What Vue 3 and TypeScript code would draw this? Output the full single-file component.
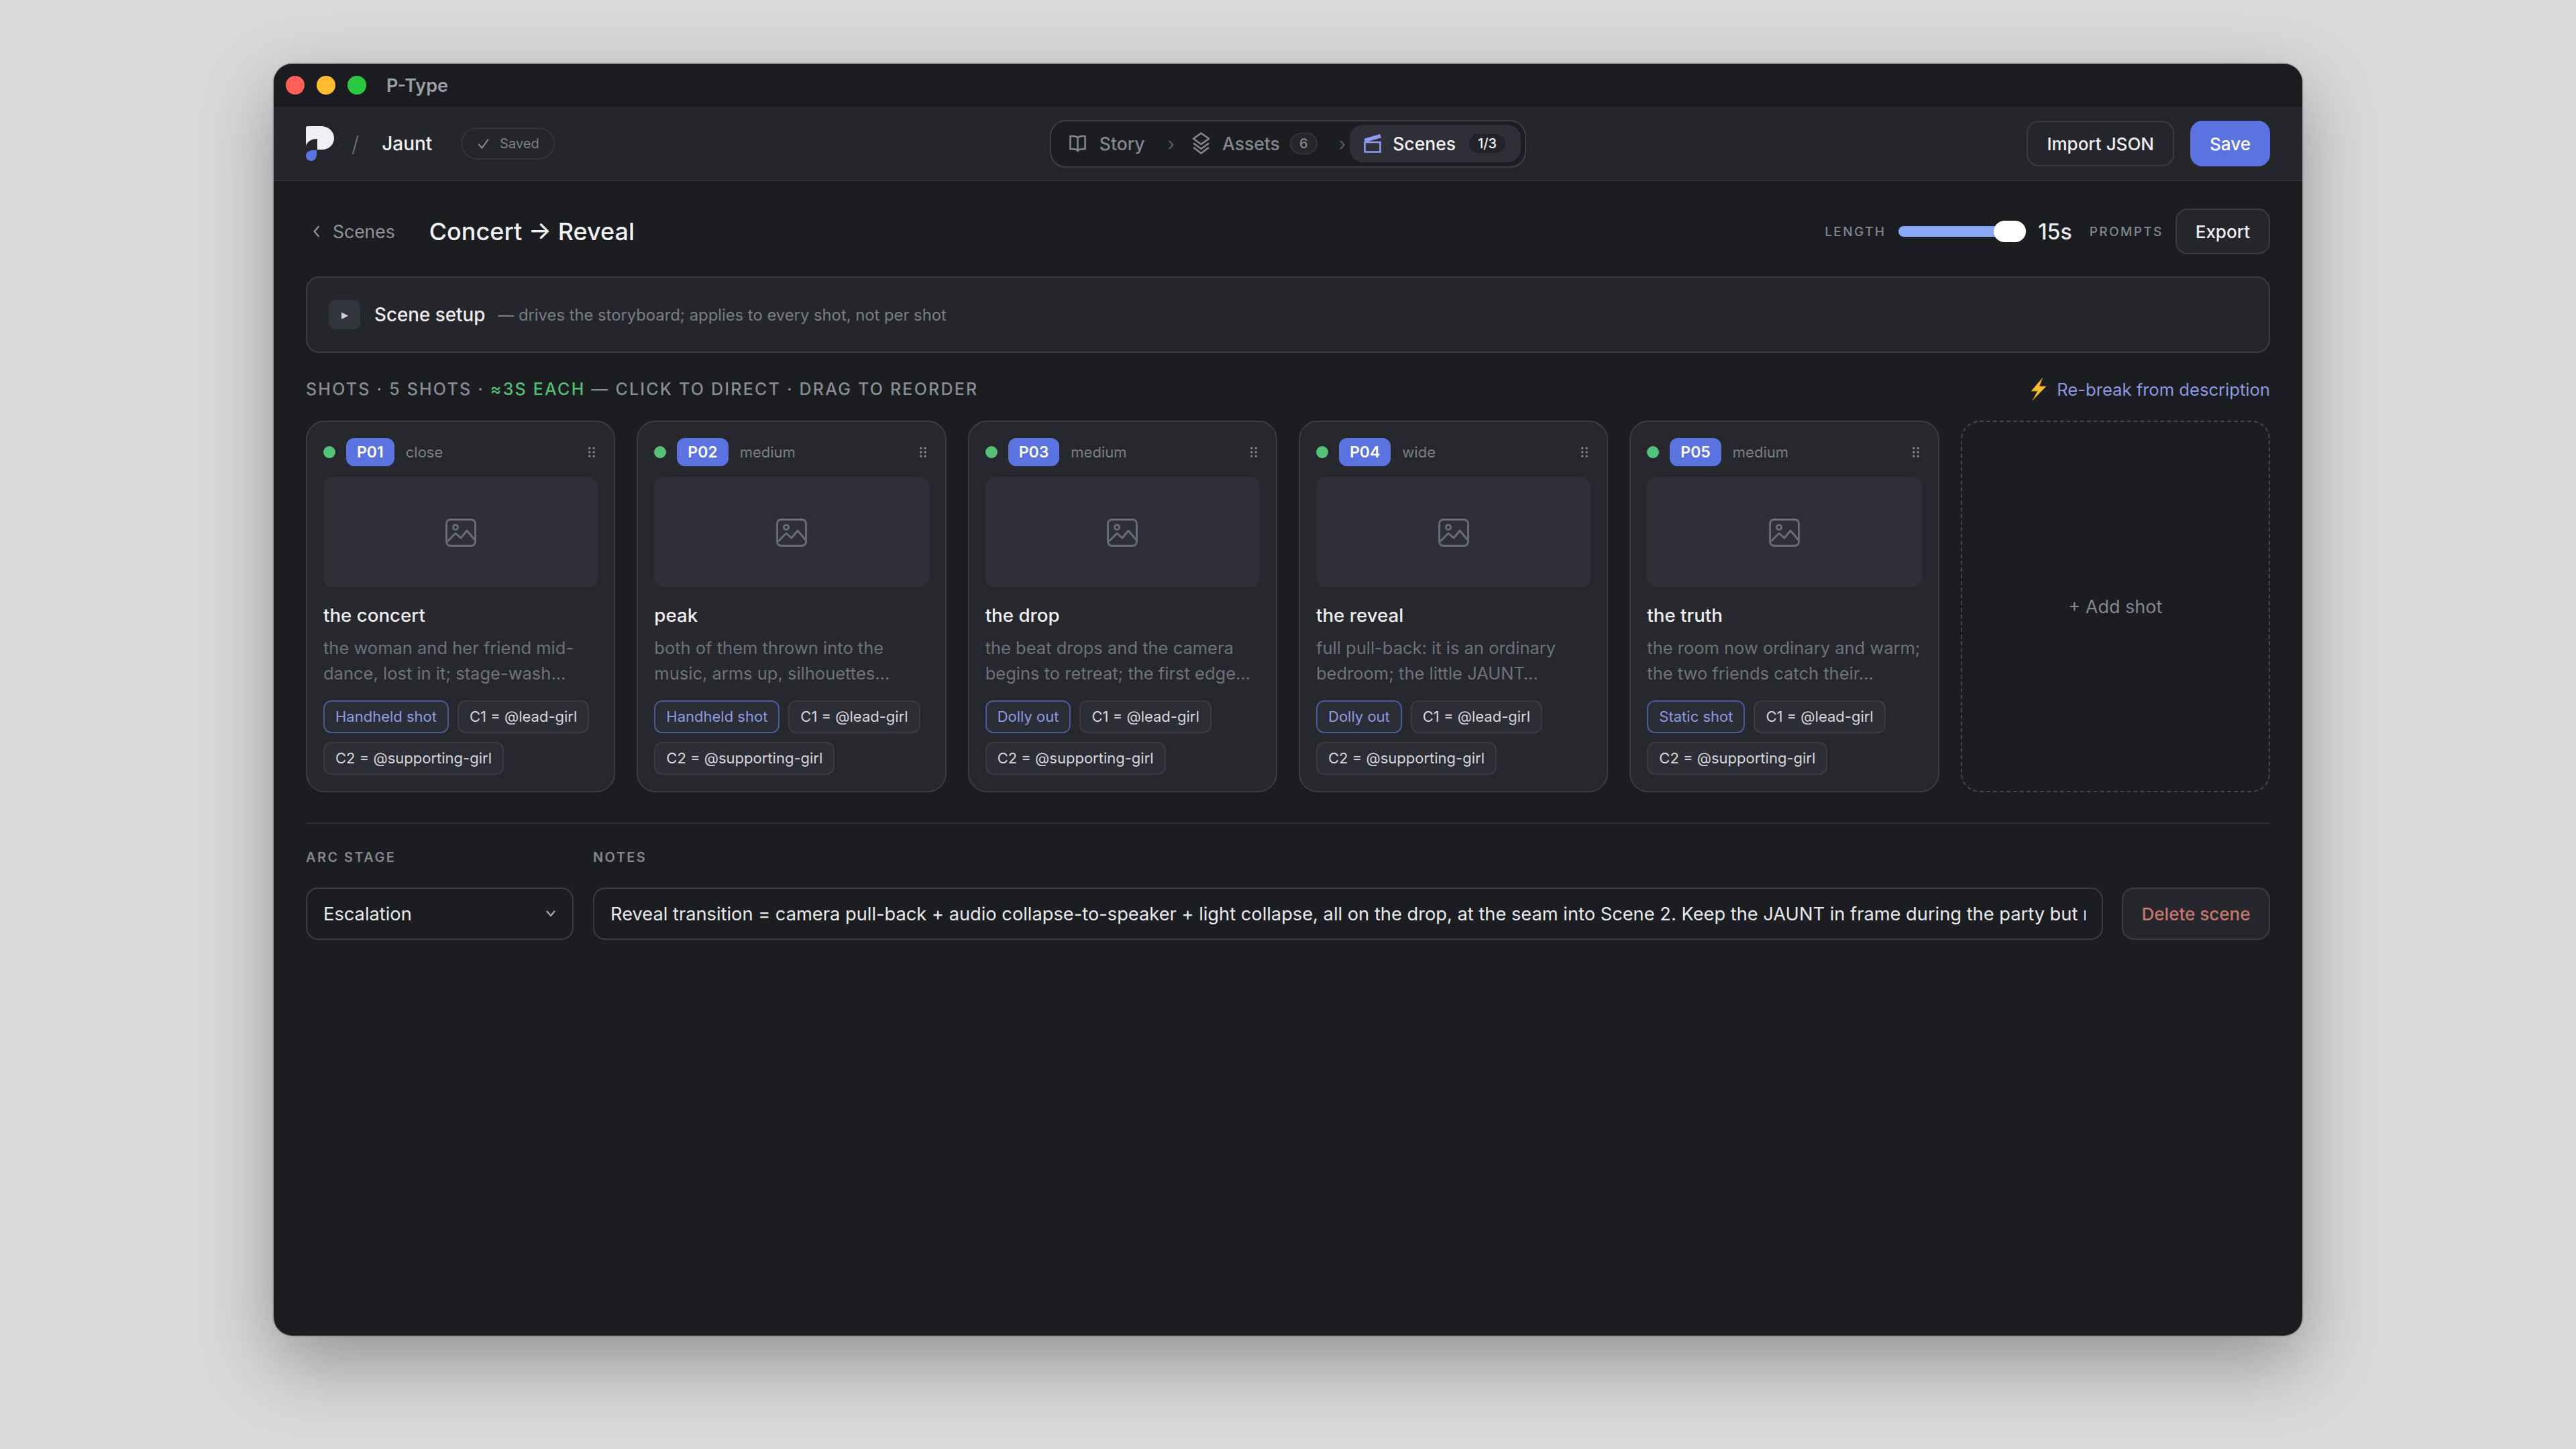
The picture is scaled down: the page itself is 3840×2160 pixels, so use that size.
<script setup lang="ts">
interface Shot { id: string; size: string; title: string; line1: string; line2: string; move: string }
const shots: Shot[] = [
  { id: 'P01', size: 'close', title: 'the concert', line1: 'the woman and her friend mid-', line2: 'dance, lost in it; stage-wash…', move: 'Handheld shot' },
  { id: 'P02', size: 'medium', title: 'peak', line1: 'both of them thrown into the', line2: 'music, arms up, silhouettes…', move: 'Handheld shot' },
  { id: 'P03', size: 'medium', title: 'the drop', line1: 'the beat drops and the camera', line2: 'begins to retreat; the first edge…', move: 'Dolly out' },
  { id: 'P04', size: 'wide', title: 'the reveal', line1: 'full pull-back: it is an ordinary', line2: 'bedroom; the little JAUNT…', move: 'Dolly out' },
  { id: 'P05', size: 'medium', title: 'the truth', line1: 'the room now ordinary and warm;', line2: 'the two friends catch their…', move: 'Static shot' },
]
const notes = 'Reveal transition = camera pull-back + audio collapse-to-speaker + light collapse, all on the drop, at the seam into Scene 2. Keep the JAUNT in frame during the party but r'
</script>

<template>
  <div class="page">
    <div class="window">
      <div class="titlebar">
        <span class="light red"></span><span class="light yellow"></span><span class="light green"></span>
        <span class="app-name">P-Type</span>
      </div>

      <header class="header">
        <div class="brand">
          <svg class="logo" viewBox="0 0 42 52" width="42" height="52">
            <path fill="#eef0f6" d="M3 0H22C34 0 42 8 42 18C42 28 34 35 24 35H17V19C9 19 3 22 0 29V3C0 1 1 0 3 0Z"/>
            <path fill="#5b73e0" d="M10 36H16V43C16 48 12 52 8 52C3 52 0 48 0 44C0 39 5 36 10 36Z"/>
          </svg>
          <span class="slash">/</span>
          <span class="project">Jaunt</span>
          <span class="saved">
            <svg viewBox="0 0 20 20" width="20" height="20" fill="none" stroke="#8b8d95" stroke-width="2"><path d="M2.5 11l5 5.5L17 3.5"/></svg>
            Saved
          </span>
        </div>

        <nav class="steps">
          <span class="step story">
            <svg viewBox="0 0 26 30" width="25" height="30" fill="none" stroke="#85878f" stroke-width="2.6"><path d="M13 5.5C10 3.5 6 3 1.5 3.5V23.5C6 23 10 23.5 13 25.500C16 23.500 20 23 24.500 23.500V3.500C20 3 16 3.500 13 5.500ZM13 5.500V28"/></svg>
            Story
          </span>
          <span class="sep">›</span>
          <span class="step assets">
            <svg viewBox="0 0 28 36" width="27" height="36" fill="none" stroke="#85878f" stroke-width="2.6" stroke-linejoin="round"><path d="M14 2L26 10.500L14 19L2 10.500ZM2 17.500L14 26L26 17.500M2 24L14 33L26 24"/></svg>
            Assets
            <span class="count">6</span>
          </span>
          <span class="sep">›</span>
          <span class="step active">
            <svg viewBox="0 0 26 30" width="26" height="30" fill="none" stroke="#8f98f2" stroke-width="2.6"><path d="M1.500 13H24.500V27.500H1.500Z"/><path d="M1 8L24 1.500L25.500 6L2.500 12.500Z" fill="#8f98f2" stroke-width="1"/></svg>
            Scenes
            <span class="progress">1/3</span>
          </span>
        </nav>

        <div class="actions">
          <button class="btn">Import JSON</button>
          <button class="btn primary">Save</button>
        </div>
      </header>

      <main class="main">
        <div class="subhead">
          <span class="back">
            <svg viewBox="0 0 14 24" width="12" height="22" fill="none" stroke="#9a9ca3" stroke-width="2.400"><path d="M11 3L3 12L11 21"/></svg>
            Scenes
          </span>
          <h1 class="title">Concert → Reveal</h1>
          <div class="controls">
            <span class="eyebrow small">LENGTH</span>
            <span class="slider"><span class="thumb"></span></span>
            <span class="seconds">15s</span>
            <span class="eyebrow small prompts">PROMPTS</span>
            <button class="btn">Export</button>
          </div>
        </div>

        <section class="setup">
          <span class="play">▸</span>
          <span class="setup-title">Scene setup</span>
          <span class="setup-hint">— drives the storyboard; applies to every shot, not per shot</span>
        </section>

        <div class="shots-head">
          <span class="shots-label">SHOTS · 5 SHOTS · <b class="each">≈3S EACH</b> — CLICK TO DIRECT · DRAG TO REORDER</span>
          <span class="rebreak">
            <svg viewBox="0 0 24 34" width="24" height="34"><path fill="#f6c233" stroke="#c98a12" stroke-width=".8" d="M17.500 0.500L1 20H10.500L3 33.500L23 13H13Z"/></svg>
            Re-break from description
          </span>
        </div>

        <div class="cards">
          <article v-for="s in shots" :key="s.id" class="card">
            <div class="card-top">
              <span class="dot"></span>
              <span class="pid">{{ s.id }}</span>
              <span class="size">{{ s.size }}</span>
              <svg class="grip" viewBox="0 0 10 16" width="10" height="16" fill="#85878f">
                <circle cx="1.800" cy="2" r="1.700"/><circle cx="8.200" cy="2" r="1.700"/>
                <circle cx="1.800" cy="8" r="1.700"/><circle cx="8.200" cy="8" r="1.700"/>
                <circle cx="1.800" cy="14" r="1.700"/><circle cx="8.200" cy="14" r="1.700"/>
              </svg>
            </div>
            <div class="thumb-box">
              <svg viewBox="0 0 46 42" width="46" height="42" fill="none" stroke="#6c6e75" stroke-width="2.800" stroke-linejoin="round">
                <rect x="1.500" y="1.500" width="43" height="39" rx="6"/>
                <circle cx="15" cy="13" r="3.600"/>
                <path d="M3 34L15 22L23 29L32 18L44 32"/>
              </svg>
            </div>
            <div class="card-title">{{ s.title }}</div>
            <p class="desc">{{ s.line1 }}<br />{{ s.line2 }}</p>
            <div class="tags">
              <span class="tag move">{{ s.move }}</span>
              <span class="tag">C1 = @lead-girl</span>
              <span class="tag">C2 = @supporting-girl</span>
            </div>
          </article>
          <div class="add">+ Add shot</div>
        </div>

        <div class="footer">
          <div class="field arc">
            <label class="eyebrow">ARC STAGE</label>
            <div class="control select">
              Escalation
              <svg viewBox="0 0 16 12" width="16" height="12" fill="none" stroke="#a5a7ad" stroke-width="2.400"><path d="M2 2L8 9L14 2"/></svg>
            </div>
          </div>
          <div class="field notes">
            <label class="eyebrow">NOTES</label>
            <div class="control note-text"><span class="clip">{{ notes }}</span></div>
          </div>
          <button class="delete">Delete scene</button>
        </div>
      </main>
    </div>
  </div>
</template>

<style>
html, body { margin: 0; background: #d9d9d9; }
</style>

<style scoped>
* { box-sizing: border-box; }
.page {
  width: 3840px; height: 2160px; padding: 95px 408px 0;
  background: #d9d9d9; overflow: hidden;
  font-family: Inter, "Noto Sans", sans-serif; color: #e9e9ec;
}
.window {
  width: 3024px; height: 1896px; background: #1b1d21; border-radius: 28px; overflow: hidden;
  box-shadow: 0 40px 110px rgba(0,0,0,.32), 0 0 3px rgba(0,0,0,.5);
}
.titlebar { height: 64px; background: #1b1c20; display: flex; align-items: center; padding-left: 18px; gap: 18px; }
.light { width: 28px; height: 28px; border-radius: 50%; }
.red { background: #ff5f57; } .yellow { background: #febc2e; } .green { background: #28c840; }
.app-name { margin-left: 12px; font-size: 27px; font-weight: 600; color: #9c9ea5; }

.header { height: 111px; background: #24262b; border-bottom: 2px solid #2f3137; display: grid; grid-template-columns: 1fr auto 1fr; align-items: center; padding: 1px 48px 0; }
.brand { display: flex; align-items: center; }
.logo { display: block; }
.slash { margin-left: 26px; font-size: 32px; color: #6e7077; font-weight: 300; }
.project { margin-left: 34px; font-size: 28px; font-weight: 500; color: #f0f0f2; }
.saved { margin-left: 43px; height: 48px; width: 140px; border: 2px solid #33353b; border-radius: 24px; display: flex; align-items: center; justify-content: center; gap: 14px; font-size: 20px; color: #7f8188; }

.steps { height: 71px; display: flex; align-items: center; background: #1b1d21; border: 2px solid #3c3e46; border-radius: 24px; padding: 0 6px 0 27px; font-size: 26.500px; font-weight: 500; color: #85878f; }
.step { display: flex; align-items: center; }
.story svg { margin-right: 20px; }
.assets svg { margin-right: 18px; }
.sep { font-size: 26px; color: #55575e; }
.story + .sep { margin: 0 26px 0 34px; }
.assets + .sep { margin: 0 6px 0 32px; }
.count { margin-left: 15px; width: 41px; height: 32px; border-radius: 16px; border: 2px solid #33353b; background: #24262b; display: flex; align-items: center; justify-content: center; font-size: 20px; }
.active { width: 255px; height: 56px; background: #2e2f37; border-radius: 20px; padding-left: 21px; color: #f2f2f4; }
.active svg { margin-right: 17px; }
.progress { margin-left: 20px; width: 54px; height: 28px; border-radius: 14px; background: #212328; display: flex; align-items: center; justify-content: center; font-size: 20px; }

.actions { display: flex; justify-content: flex-end; gap: 24px; }
.btn { height: 68px; padding: 0 28px; border: 2px solid #3a3c43; border-radius: 18px; background: #24262b; color: #efeff2; font: 500 26px Inter, sans-serif; }
.primary { background: #5b73e0; border-color: #5b73e0; color: #fff; padding: 0; width: 119px; }

.main { padding: 0 48px; }
.subhead { height: 142px; padding-top: 41px; display: flex; align-items: flex-start; }
.back { height: 68px; margin-left: 10px; display: flex; align-items: center; gap: 18px; font-size: 26.500px; color: #8f9198; }
.title { margin: 0 0 0 51px; height: 68px; line-height: 68px; font-size: 36px; font-weight: 500; color: #f2f2f4; }
.controls { margin-left: auto; height: 68px; display: flex; align-items: center; }
.eyebrow { font-size: 20px; font-weight: 600; letter-spacing: 2.400px; color: #85878f; }
.eyebrow.small { font-size: 19px; font-weight: 500; }
.slider { position: relative; display: block; margin-left: 19px; width: 190px; height: 16px; border-radius: 8px; background: #8aa8f8; }
.thumb { position: absolute; right: 0; top: -8px; width: 48px; height: 32px; border-radius: 16px; background: #fff; }
.seconds { margin-left: 18px; font-size: 32px; font-weight: 500; color: #f0f0f2; }
.prompts { margin-left: 26px; margin-right: 18px; }

.setup { height: 114px; background: #24262b; border: 2px solid #3a3c44; border-radius: 20px; display: flex; align-items: center; padding: 0 32px; }
.play { width: 47px; height: 44px; border-radius: 10px; background: #33353c; display: flex; align-items: center; justify-content: center; font-size: 20px; color: #d0d0d4; }
.setup-title { margin-left: 21px; font-size: 27.800px; font-weight: 500; color: #eeeef0; }
.setup-hint { margin-left: 19px; font-size: 23.800px; color: #7b7d84; }

.shots-head { margin-top: 36px; height: 36px; display: flex; align-items: center; justify-content: space-between; }
.shots-label { font-size: 25px; font-weight: 500; letter-spacing: 2.200px; color: #8a8c94; }
.each { font-weight: 500; color: #4fbf75; }
.rebreak { display: flex; align-items: center; gap: 15px; font-size: 25.600px; color: #8c9ae0; }

.cards { margin-top: 29px; display: grid; grid-template-columns: repeat(6, 1fr); gap: 32px; }
.card { height: 554px; background: #26282d; border: 2px solid #3a3c44; border-radius: 28px; padding: 24px; }
.card-top { height: 42px; display: flex; align-items: center; }
.dot { width: 18px; height: 18px; border-radius: 50%; background: #55c278; }
.pid { margin-left: 16px; height: 42px; padding: 0 16px; border-radius: 12px; background: #5b73e0; color: #fff; font-size: 23px; font-weight: 600; line-height: 42px; }
.size { margin-left: 17px; font-size: 22px; color: #7b7d84; }
.grip { margin-left: auto; margin-right: 4px; }
.thumb-box { margin-top: 16px; height: 164px; padding-top: 2px; border-radius: 14px; background: #2f3037; display: flex; align-items: center; justify-content: center; }
.card-title { margin-top: 24px; height: 36px; line-height: 36px; font-size: 27.700px; font-weight: 500; color: #eeeef0; }
.desc { margin: 12px 0 0; font-size: 25.500px; line-height: 38px; color: #6f7279; white-space: nowrap; }
.tags { margin-top: 21px; display: flex; flex-wrap: wrap; gap: 13px; }
.tag { height: 49px; line-height: 45px; padding: 0 16px; border: 2px solid #3a3c44; border-radius: 12px; background: #2d2e35; font-size: 22px; color: #d6d6da; }
.tag.move { border-color: #4a5a94; background: #2b2d36; color: #8c9ae0; }
.add { height: 554px; border: 2px dashed #44464e; border-radius: 28px; display: flex; align-items: center; justify-content: center; font-size: 27px; color: #85878f; }

.footer { margin-top: 45px; padding-top: 38px; border-top: 2px solid #2f3138; display: flex; align-items: flex-end; gap: 28px; }
.field { display: flex; flex-direction: column; gap: 33px; }
.field label { display: block; height: 24px; line-height: 24px; }
.arc { width: 399px; margin-right: 1px; }
.notes { flex: 1; min-width: 0; }
.control { height: 78px; border: 2px solid #3a3c44; border-radius: 18px; background: #1b1d21; display: flex; align-items: center; padding: 0 24px; font-size: 27.250px; color: #e9e9ec; }
.select { justify-content: space-between; }
.clip { display: block; overflow: hidden; white-space: nowrap; }
.delete { width: 221px; height: 78px; border: 2px solid #3a3c44; border-radius: 18px; background: #25272c; color: #c87470; font: 500 26px Inter, sans-serif; }
</style>
